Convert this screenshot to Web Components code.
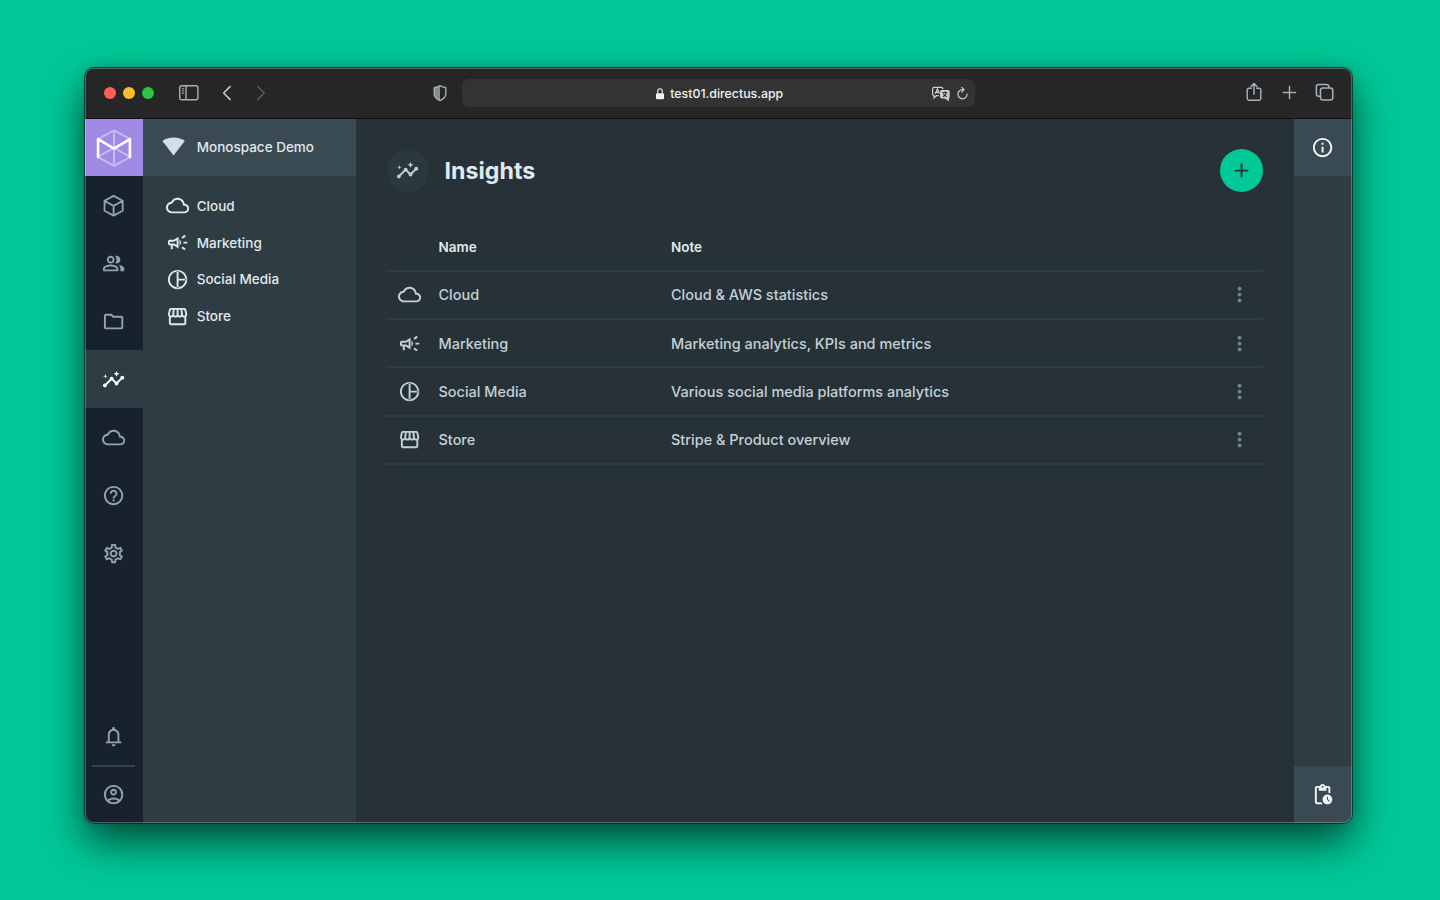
<!DOCTYPE html>
<html lang="en">
<head>
<meta charset="utf-8">
<title>Insights</title>
<style>
body{margin:0;background:#00c897;font-family:Inter,"Liberation Sans",sans-serif;color:#e0e8ec;width:1440px;height:900px;overflow:hidden}
</style>
</head>
<body>
<insights-desktop></insights-desktop>
<script>
const ring='M12 2C6.48 2 2 6.48 2 12s4.48 10 10 10 10-4.48 10-10S17.52 2 12 2zm0 18c-4.41 0-8-3.59-8-8s3.59-8 8-8 8 3.59 8 8-3.59 8-8 8z';
const p=d=>`<path fill="currentColor" d="${d}"/>`;
const s=(d,w=1.5,x='')=>`<path fill="none" stroke="currentColor" stroke-width="${w}" ${x} d="${d}"/>`;
const ICONS={
cube:s('M12 1.9L21.4 7v10.3L12 22.4 2.6 17.3V7zM2.9 7.2L12 12.3l9.1-5.1M12 12.3v9.8',1.9,'stroke-linejoin="round"'),
people:p('M16.67 13.13C18.04 14.06 19 15.32 19 17v3h3c.6 0 1-.4 1-1v-2c0-2.18-3.57-3.47-6.33-3.87zM15 12c2.21 0 4-1.79 4-4s-1.79-4-4-4c-.47 0-.91.1-1.33.24C14.5 5.27 15 6.58 15 8s-.5 2.73-1.33 3.76c.42.14.86.24 1.33.24zM9 12c2.21 0 4-1.79 4-4s-1.79-4-4-4-4 1.79-4 4 1.79 4 4 4zm0-6c1.1 0 2 .9 2 2s-.9 2-2 2-2-.9-2-2 .9-2 2-2zM9 13c-2.67 0-8 1.34-8 4v2c0 .6.4 1 1 1h14c.6 0 1-.4 1-1v-2c0-2.66-5.33-4-8-4zm6 5H3v-.99C3.2 16.29 6.3 15 9 15s5.8 1.29 6 2v1z'),
folder:p('M9.17 6l2 2H20v10H4V6h5.17M10 4H4c-1.1 0-1.99.9-1.99 2L2 18c0 1.1.9 2 2 2h16c1.1 0 2-.9 2-2V8c0-1.1-.9-2-2-2h-8l-2-2z'),
insights:p('M21 8c-1.45 0-2.26 1.44-1.93 2.51l-3.55 3.56c-.3-.09-.74-.09-1.04 0l-2.55-2.55C12.27 10.45 11.46 9 10 9c-1.45 0-2.27 1.44-1.93 2.52l-4.56 4.55C2.44 15.74 1 16.55 1 18c0 1.1.9 2 2 2 1.45 0 2.26-1.44 1.93-2.51l4.55-4.56c.3.09.74.09 1.04 0l2.55 2.55C12.73 16.55 13.54 18 15 18c1.45 0 2.27-1.44 1.93-2.52l3.56-3.55C21.56 12.26 23 11.45 23 10c0-1.1-.9-2-2-2zM15 9l.94-2.07L18 6l-2.06-.93L15 3l-.92 2.07L12 6l2.08.93zM3.5 11L4 9l2-.5L4 8l-.5-2L3 8l-2 .5L3 9z'),
cloud:p('M19.35 10.04C18.67 6.59 15.64 4 12 4 9.11 4 6.6 5.64 5.35 8.04 2.34 8.36 0 10.91 0 14c0 3.31 2.69 6 6 6h13c2.76 0 5-2.24 5-5 0-2.64-2.05-4.78-4.65-4.96zM19 18H6c-2.21 0-4-1.79-4-4 0-2.05 1.53-3.76 3.56-3.97l1.07-.11.5-.95C8.08 7.14 9.94 6 12 6c2.62 0 4.88 1.86 5.39 4.43l.3 1.5 1.53.11c1.56.1 2.78 1.41 2.78 2.96 0 1.65-1.35 3-3 3z'),
help:p('M11 18h2v-2h-2v2zm1-16C6.48 2 2 6.48 2 12s4.48 10 10 10 10-4.48 10-10S17.52 2 12 2zm0 18c-4.41 0-8-3.59-8-8s3.59-8 8-8 8 3.59 8 8-3.59 8-8 8zm0-14c-2.21 0-4 1.79-4 4h2c0-1.1.9-2 2-2s2 .9 2 2c0 2-3 1.75-3 5h2c0-2.25 3-2.5 3-5 0-2.21-1.79-4-4-4z'),
settings:p('M19.43 12.98c.04-.32.07-.64.07-.98 0-.34-.03-.66-.07-.98l2.11-1.65c.19-.15.24-.42.12-.64l-2-3.46c-.09-.16-.26-.25-.44-.25-.06 0-.12.01-.17.03l-2.49 1c-.52-.4-1.08-.73-1.69-.98l-.38-2.65C14.46 2.18 14.25 2 14 2h-4c-.25 0-.46.18-.49.42l-.38 2.65c-.61.25-1.17.59-1.69.98l-2.49-1c-.06-.02-.12-.03-.18-.03-.17 0-.34.09-.43.25l-2 3.46c-.13.22-.07.49.12.64l2.11 1.65c-.04.32-.07.65-.07.98 0 .33.03.66.07.98l-2.11 1.65c-.19.15-.24.42-.12.64l2 3.46c.09.16.26.25.44.25.06 0 .12-.01.17-.03l2.49-1c.52.4 1.08.73 1.69.98l.38 2.65c.03.24.24.42.49.42h4c.25 0 .46-.18.49-.42l.38-2.65c.61-.25 1.17-.59 1.69-.98l2.49 1c.06.02.12.03.18.03.17 0 .34-.09.43-.25l2-3.46c.12-.22.07-.49-.12-.64l-2.11-1.65zm-1.98-1.71c.04.31.05.52.05.73 0 .21-.02.43-.05.73l-.14 1.13.89.7 1.08.84-.7 1.21-1.27-.51-1.04-.42-.9.68c-.43.32-.84.56-1.25.73l-1.06.43-.16 1.13-.2 1.35h-1.4l-.19-1.35-.16-1.13-1.06-.43c-.43-.18-.83-.41-1.23-.71l-.91-.7-1.06.43-1.27.51-.7-1.21 1.08-.84.89-.7-.14-1.13c-.03-.31-.05-.54-.05-.74s.02-.43.05-.73l.14-1.13-.89-.7-1.08-.84.7-1.21 1.27.51 1.04.42.9-.68c.43-.32.84-.56 1.25-.73l1.06-.43.16-1.13.2-1.35h1.39l.19 1.35.16 1.13 1.06.43c.43.18.83.41 1.23.71l.91.7 1.06-.43 1.27-.51.7 1.21-1.07.85-.89.7.14 1.13zM12 8c-2.21 0-4 1.79-4 4s1.79 4 4 4 4-1.79 4-4-1.79-4-4-4zm0 6c-1.1 0-2-.9-2-2s.9-2 2-2 2 .9 2 2-.9 2-2 2z'),
bell:p('M4 19v-2h2v-7q0-2.075 1.25-3.688Q8.5 4.7 10.5 4.2v-.7q0-.625.438-1.062Q11.375 2 12 2t1.063.438q.437.437.437 1.062v.7q2 .5 3.25 2.112Q18 7.925 18 10v7h2v2Zm8 3q-.825 0-1.412-.587Q10 20.825 10 20h4q0 .825-.587 1.413Q12.825 22 12 22Zm-4-5h8v-7q0-1.65-1.175-2.825Q13.65 6 12 6q-1.65 0-2.825 1.175Q8 8.35 8 10Z'),
account:p('M5.85 17.1q1.275-.975 2.85-1.538Q10.275 15 12 15q1.725 0 3.3.562 1.575.563 2.85 1.538.875-1.025 1.363-2.325Q20 13.475 20 12q0-3.325-2.337-5.663Q15.325 4 12 4T6.338 6.337Q4 8.675 4 12q0 1.475.488 2.775.487 1.3 1.362 2.325ZM12 13q-1.475 0-2.488-1.012Q8.5 10.975 8.5 9.5t1.012-2.488Q10.525 6 12 6t2.488 1.012Q15.5 8.025 15.5 9.5t-1.012 2.488Q13.475 13 12 13Zm0 9q-2.075 0-3.9-.788-1.825-.787-3.175-2.137-1.35-1.35-2.137-3.175Q2 14.075 2 12t.788-3.9q.787-1.825 2.137-3.175 1.35-1.35 3.175-2.138Q9.925 2 12 2t3.9.787q1.825.788 3.175 2.138 1.35 1.35 2.137 3.175Q22 9.925 22 12t-.788 3.9q-.787 1.825-2.137 3.175-1.35 1.35-3.175 2.137Q14.075 22 12 22Zm0-2q1.325 0 2.5-.387 1.175-.388 2.15-1.113-.975-.725-2.15-1.113Q13.325 17 12 17t-2.5.387q-1.175.388-2.15 1.113.975.725 2.15 1.113Q10.675 20 12 20Zm0-9q.65 0 1.075-.425.425-.425.425-1.075 0-.65-.425-1.075Q12.65 8 12 8q-.65 0-1.075.425Q10.5 8.85 10.5 9.5q0 .65.425 1.075Q11.35 11 12 11Z'),
campaign:p('M18 11v2h4v-2h-4zM16 17.61c.96.71 2.21 1.65 3.2 2.39.4-.53.8-1.07 1.2-1.6-.99-.74-2.24-1.68-3.2-2.4-.4.54-.8 1.08-1.2 1.61zM20.4 5.6C20 5.07 19.6 4.53 19.2 4c-.99.74-2.24 1.68-3.2 2.4.4.53.8 1.07 1.2 1.6.96-.72 2.21-1.65 3.2-2.4zM4 9c-1.1 0-2 .9-2 2v2c0 1.1.9 2 2 2h1v4h2v-4h1l5 3V6L8 9H4zm5.03 1.71L11 9.53v4.94l-1.97-1.18-.48-.29H4v-2h4.55l.48-.29zM15.5 12c0-1.33-.58-2.53-1.5-3.35v6.69c.92-.81 1.5-2.01 1.5-3.34z'),
pie:p(ring+'M11 3h2v18h-2zM12 11h9v2h-9z'),
store:p('M21.9 8.89l-1.05-4.37c-.22-.9-1-1.52-1.91-1.52H5.05c-.9 0-1.69.63-1.9 1.52L2.1 8.89c-.24 1.02-.02 2.06.62 2.88.08.11.19.19.28.29V19c0 1.1.9 2 2 2h14c1.1 0 2-.9 2-2v-6.94c.09-.09.2-.18.28-.28.64-.82.87-1.87.62-2.89zm-2.99-3.9l1.05 4.37c.1.42.01.84-.25 1.17-.14.18-.44.47-.94.47-.61 0-1.14-.49-1.21-1.14L16.98 5l1.93-.01zM13 5h1.96l.54 4.52c.05.39-.07.78-.33 1.07-.22.26-.54.41-.95.41-.67 0-1.22-.59-1.22-1.31V5zM8.49 9.52L9.04 5H11v4.69c0 .72-.55 1.31-1.29 1.31-.34 0-.65-.15-.89-.41-.25-.29-.37-.68-.33-1.07zm-4.45-.16L5.05 5h1.97l-.58 4.86c-.08.65-.6 1.14-1.21 1.14-.49 0-.8-.29-.93-.47-.27-.32-.36-.75-.26-1.17zM5 19v-6.03c.08.01.15.03.23.03.87 0 1.66-.36 2.24-.95.6.6 1.4.95 2.31.95.87 0 1.65-.36 2.23-.93.59.57 1.39.93 2.29.93.84 0 1.64-.35 2.24-.95.58.59 1.37.95 2.24.95.08 0 .15-.02.23-.03V19H5z'),
info:p(ring+'M11 7h2v2h-2zM11 11h2v6h-2z'),
pending:p('M17 12c-2.76 0-5 2.24-5 5s2.24 5 5 5 5-2.24 5-5-2.24-5-5-5zm1.65 7.35L16.5 17.2V14h1v2.79l1.85 1.85-.7.71zM18 3h-3.18C14.4 1.84 13.3 1 12 1s-2.4.84-2.82 2H6c-1.1 0-2 .9-2 2v15c0 1.1.9 2 2 2h6.11c-.59-.57-1.07-1.25-1.42-2H6V5h2v3h8V5h2v5.08c.71.1 1.38.31 2 .6V5c0-1.1-.9-2-2-2zm-6 2c-.55 0-1-.45-1-1s.45-1 1-1 1 .45 1 1-.45 1-1 1z'),
wifi:p('M12 21.3L.4 6.1C3.2 3.9 7.3 2.6 12 2.6s8.800 1.300 11.600 3.500z'),
add:p('M19 13h-6v6h-2v-6H5v-2h6V5h2v6h6v2z'),
more:p('M12 8c1.100 0 2-.9 2-2s-.9-2-2-2-2 .9-2 2 .9 2 2 2zm0 2c-1.100 0-2 .9-2 2s.9 2 2 2 2-.9 2-2-.9-2-2-2zm0 6c-1.100 0-2 .9-2 2s.9 2 2 2 2-.9 2-2-.9-2-2-2z'),
logo:'<g fill="none" stroke="#fff" stroke-linecap="round" stroke-linejoin="round"><path stroke-width="1.200" opacity=".4" d="M2.700 6.900L12 1.900l9.300 5M2.700 17.100L12 22.200l9.300-5.100M12 1.900v10l9.300 5.200M12 11.900l-9.300 5.200M12 12v10.200"/><path stroke-width="1.500" d="M2.900 17.100V6.900L12 12.300l9.100-5.400v10.200"/></g>',
sidebar:'<g fill="none" stroke="currentColor" stroke-width="1.400"><rect x="2.700" y="4.800" width="18.200" height="14" rx="2"/><path d="M9 5v13.600"/><path stroke-width="1" d="M4.800 7.800h2.400M4.800 10h2.400M4.800 12.200h2.400"/></g>',
back:s('M15.300 5L8.300 12l7 7',1.700,'stroke-linecap="round" stroke-linejoin="round"'),
forward:s('M8.500 5l7 7-7 7',1.700,'stroke-linecap="round" stroke-linejoin="round"'),
shield:'<path fill="none" stroke="currentColor" stroke-width="1.500" stroke-linejoin="round" d="M12 4c2 1.300 4 1.900 6.300 2.200v7c0 3.200-2.700 5.500-6.300 7-3.600-1.500-6.300-3.800-6.300-7v-7C8 5.900 10 5.300 12 4z"/><path fill="currentColor" opacity=".75" d="M12 4v16c-3.600-1.500-6.300-3.600-6.300-6.800v-7C8 5.900 10 5.300 12 4z"/>',
lock:'<rect x="4" y="10.500" width="16" height="12" rx="2" fill="currentColor"/><path d="M7.500 11V6.500a4.500 4.900 0 0 1 9 0V11" fill="none" stroke="currentColor" stroke-width="2.200"/>',
translate:'<g><path fill="none" stroke="currentColor" stroke-width="1.400" d="M5 5h7.500a2.500 2.500 0 0 1 2.500 2.200M10 14.500H7.300L4.600 17v-2.500A2 2 0 0 1 3 12.400V7a2 2 0 0 1 2-2"/><path fill="none" stroke="currentColor" stroke-width="1.400" d="M6 12.300L8.500 6.800l2.300 5.500M7.100 10.600h2.900"/><rect x="11.500" y="8" width="11" height="9.800" rx="2" fill="currentColor"/><path fill="currentColor" d="M16.500 17h5v4z"/><path fill="none" stroke="#333" stroke-width="1.200" d="M14 10.800h6M17 9.400v1.400M14.600 15.800c2.300-.8 3.700-2.400 4.200-5M15.200 12c.7 1.800 2 3 4.100 3.800"/></g>',
reload:s('M19.300 13a7.300 7.300 0 1 1-7.300-7.100M10.800 2.200L14.600 5.900l-3.800 3.800',1.900,'stroke-linecap="round" stroke-linejoin="round"'),
share:s('M9 8H6.500A1.900 1.900 0 0 0 4.600 9.900V19a1.900 1.900 0 0 0 1.900 1.900h11A1.900 1.900 0 0 0 19.400 19V9.900A1.900 1.900 0 0 0 17.500 8H15M12 14.500V3M8.700 6.100L12 2.800l3.300 3.300',1.600,'stroke-linecap="round" stroke-linejoin="round"'),
plus:s('M12 5v14M5 12h14',1.700,'stroke-linecap="round"'),
tabs:'<g fill="none" stroke="currentColor" stroke-width="1.600"><rect x="7.800" y="7.400" width="12.800" height="12.500" rx="2.400"/><path d="M7.500 16H5.900a2.400 2.400 0 0 1-2.400-2.400V6A2.400 2.400 0 0 1 5.900 3.600h8.200A2.400 2.400 0 0 1 16.500 6v1.400"/></g>'
};
function define(name,html){
  const t=document.createElement('template');t.innerHTML=html;
  customElements.define(name,class extends HTMLElement{
    constructor(){super();this.attachShadow({mode:'open'}).append(t.content.cloneNode(true));}
  });
}
customElements.define('ui-icon',class extends HTMLElement{
  connectedCallback(){
    const z=this.getAttribute('size')||23.2;
    if(!this.shadowRoot)this.attachShadow({mode:'open'});
    this.shadowRoot.innerHTML=`<style>:host{display:block;flex:none;width:${z}px;height:${z}px}svg{display:block;width:100%;height:100%}</style><svg viewBox="0 0 24 24">${ICONS[this.getAttribute('name')]}</svg>`;
  }
});
define('traffic-lights',`<style>:host{display:flex;gap:7.300px}i{width:12px;height:12px;border-radius:50%;background:#fe5f57}i:nth-of-type(2){background:#fdbc2e}i:nth-of-type(3){background:#28c941}</style><i></i><i></i><i></i>`);
define('address-bar',`<style>:host{display:grid;grid-template-columns:1fr auto 1fr;align-items:center;box-sizing:border-box;width:513px;height:28px;border-radius:7px;background:#333;color:#edf3f5;font-size:12.350px;font-weight:500;padding:0 5px}
.site{display:flex;align-items:center;gap:4.500px;grid-column:2;padding-top:1px}.tools{display:flex;justify-content:flex-end;align-items:center;gap:4px;color:#c9d3d8}</style>
<span class="site"><ui-icon name="lock" size="12"></ui-icon><slot></slot></span><span class="tools"><ui-icon name="translate" size="21"></ui-icon><ui-icon name="reload" size="15"></ui-icon></span>`);
define('browser-toolbar',`<style>:host{display:grid;grid-template-columns:377px auto 1fr;align-items:center;height:51px;box-sizing:border-box;background:#262626;border-bottom:1px solid #0e1214;color:#a5b0b7}
.left,.right{display:flex;align-items:center}.left{padding-left:18.700px;height:100%;box-sizing:border-box}
.side{margin-left:22.600px}.back{margin-left:15.200px;color:#c2ccd1}.fwd{margin-left:12px;color:#535c61}.shield{margin-left:156.500px}
.right{justify-content:flex-end;padding:0 16px 2px 0;gap:13.300px}.back,.fwd,.shield,.side{margin-bottom:1px}</style>
<div class="left"><traffic-lights></traffic-lights><ui-icon class="side" name="sidebar" size="24"></ui-icon><ui-icon class="back" name="back" size="22"></ui-icon><ui-icon class="fwd" name="forward" size="22"></ui-icon><ui-icon class="shield" name="shield" size="22"></ui-icon></div>
<address-bar>test01.directus.app</address-bar>
<div class="right"><ui-icon name="share" size="22"></ui-icon><ui-icon name="plus" size="21"></ui-icon><ui-icon name="tabs" size="23"></ui-icon></div>`);
define('module-button',`<style>:host{display:flex;align-items:center;justify-content:center;height:58.050px;flex:none;color:#93a2ae}:host([active]){background:#2e3c43;color:#fff}:host([brand]){background:#9f8ae6;height:57.300px}</style><slot></slot>`);
define('module-bar',`<style>:host{display:flex;flex-direction:column;width:57.500px;background:#18222f}hr{width:43px;height:2px;border:0;background:#34444c;margin:-1px 0 -1px 7px}.grow{flex:1}</style>
<module-button brand><ui-icon name="logo" size="42"></ui-icon></module-button>
<module-button><ui-icon name="cube"></ui-icon></module-button><module-button><ui-icon name="people"></ui-icon></module-button><module-button><ui-icon name="folder"></ui-icon></module-button><module-button active><ui-icon name="insights"></ui-icon></module-button><module-button><ui-icon name="cloud"></ui-icon></module-button><module-button><ui-icon name="help"></ui-icon></module-button><module-button><ui-icon name="settings"></ui-icon></module-button>
<div class="grow"></div><module-button><ui-icon name="bell"></ui-icon></module-button><hr><module-button style="height:57.400px"><ui-icon name="account"></ui-icon></module-button>`);
define('nav-item',`<style>:host{display:flex;align-items:center;height:36.800px;gap:8px;padding-left:23px;font-size:13.500px;font-weight:450}</style><slot name="icon"></slot><slot></slot>`);
define('nav-panel',`<style>:host{display:block;width:213px;background:#2e3c43;color:#e0e9ed}header{height:57px;display:flex;align-items:center;gap:12px;padding:0 0 1px 19px;background:#3a4a52;box-sizing:border-box;font-size:13.500px;font-weight:450}nav{padding-top:11.500px}</style>
<header><ui-icon name="wifi" style="color:#d3dfe4"></ui-icon>Monospace Demo</header><nav>
<nav-item><ui-icon slot="icon" name="cloud"></ui-icon>Cloud</nav-item><nav-item><ui-icon slot="icon" name="campaign"></ui-icon>Marketing</nav-item><nav-item><ui-icon slot="icon" name="pie"></ui-icon>Social Media</nav-item><nav-item><ui-icon slot="icon" name="store"></ui-icon>Store</nav-item></nav>`);
define('table-row',`<style>:host{display:grid;grid-template-columns:52.500px 232.500px 1fr 35px;align-items:center;height:48.350px;box-sizing:border-box;border-bottom:2px solid #2e3c43;font-size:14.470px;font-weight:500;color:#c4d0d6}:host([head]){font-weight:600;font-size:13.500px;color:#e0e9ed}.i{padding-left:12px}.m{color:#77858e}:host([head]) .m{visibility:hidden}</style>
<div class="i"><slot name="icon"></slot></div><slot name="name"></slot><slot name="note"></slot><ui-icon class="m" name="more"></ui-icon>`);
define('insights-main',`<style>:host{display:block;flex:1;background:#263238;padding:30.400px 31.200px 0 30.500px;box-sizing:border-box}
header{display:flex;align-items:center;height:43px}.badge{margin-left:.6px;width:42px;height:42px;border-radius:50%;background:#2b393f;display:grid;place-items:center;color:#c4d0d6}
h1{margin:1px auto 0 16px;font-size:23.200px;line-height:43px;font-weight:700;color:#e0e9ed}.add{width:43px;height:43px;border-radius:50%;background:#00c897;color:#263238;display:grid;place-items:center}.table{margin-top:31px}</style>
<header><div class="badge"><ui-icon name="insights"></ui-icon></div><h1>Insights</h1><div class="add"><ui-icon name="add"></ui-icon></div></header>
<div class="table"><table-row head><span slot="name">Name</span><span slot="note">Note</span></table-row>
<table-row><ui-icon slot="icon" name="cloud"></ui-icon><span slot="name">Cloud</span><span slot="note">Cloud &amp; AWS statistics</span></table-row>
<table-row><ui-icon slot="icon" name="campaign"></ui-icon><span slot="name">Marketing</span><span slot="note">Marketing analytics, KPIs and metrics</span></table-row>
<table-row><ui-icon slot="icon" name="pie"></ui-icon><span slot="name">Social Media</span><span slot="note">Various social media platforms analytics</span></table-row>
<table-row><ui-icon slot="icon" name="store"></ui-icon><span slot="name">Store</span><span slot="note">Stripe &amp; Product overview</span></table-row></div>`);
define('side-rail',`<style>:host{display:flex;flex-direction:column;justify-content:space-between;width:58px;background:#2e3c43;color:#f0f4f6}div{height:57px;background:#3a4a52;display:grid;place-items:center}</style><div><ui-icon name="info"></ui-icon></div><div><ui-icon name="pending"></ui-icon></div>`);
define('insights-desktop',`<style>:host{display:block;padding:68px 0 0 85px}.win{width:1267px;height:755px;border-radius:9px;box-shadow:0 0 0 1px rgba(10,40,35,.75),0 19px 42px rgba(0,0,0,.62),0 0 14px rgba(0,0,0,.12);display:grid}.clip,.rim{grid-area:1/1}.clip{border-radius:9px;overflow:hidden;display:flex;flex-direction:column}.rim{border-radius:9px;box-shadow:inset 0 0 0 1px rgba(255,255,255,.26);z-index:1;pointer-events:none}.app{display:flex;flex:1;min-height:0}</style>
<div class="win"><div class="clip"><browser-toolbar></browser-toolbar><div class="app"><module-bar></module-bar><nav-panel></nav-panel><insights-main></insights-main><side-rail></side-rail></div></div><div class="rim"></div></div>`);
</script>
</body>
</html>
